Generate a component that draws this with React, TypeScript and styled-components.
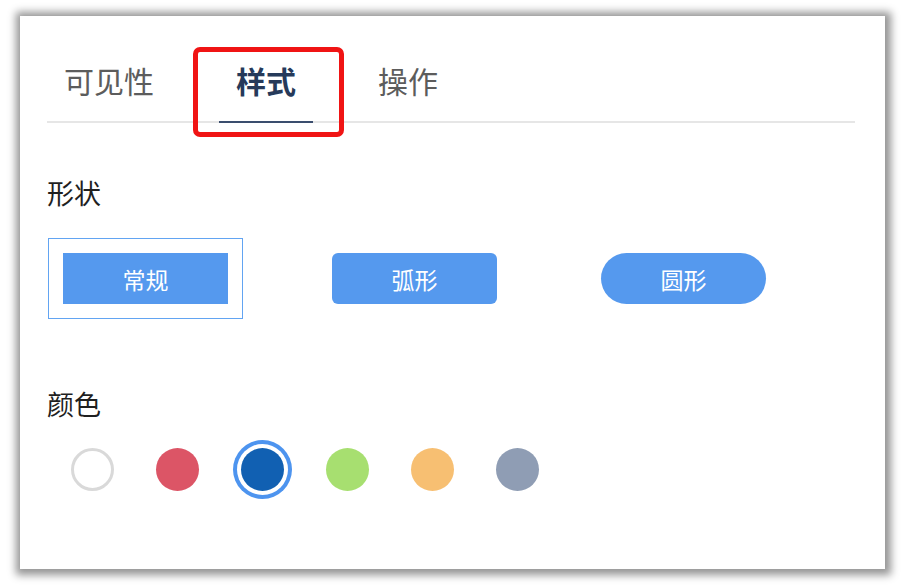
import React, { useState } from "react";
import styled, { createGlobalStyle } from "styled-components";

const GlobalStyle = createGlobalStyle`
  html, body {
    margin: 0;
    padding: 0;
    background: #fff;
  }
  body {
    font-family: "Noto Sans CJK SC", "Noto Sans", sans-serif;
  }
  * {
    box-sizing: border-box;
  }
`;

interface ActiveProps {
  $active?: boolean;
}

interface ShapeProps {
  $radius: string;
}

interface SwatchProps {
  $color: string;
  $active?: boolean;
  $outline?: boolean;
}

const tabs = ["可见性", "样式", "操作"];

const shapes = [
  { label: "常规", radius: "0" },
  { label: "弧形", radius: "6px" },
  { label: "圆形", radius: "26px" },
];

const colors = [
  { value: "#ffffff", outline: true },
  { value: "#dc5566" },
  { value: "#1160b2" },
  { value: "#a7df70" },
  { value: "#f7bf72" },
  { value: "#8f9db4" },
];

export default function App() {
  const [tab, setTab] = useState(1);
  const [shape, setShape] = useState(0);
  const [color, setColor] = useState(2);

  return (
    <>
      <GlobalStyle />
      <Page>
        <Panel>
          <TabBar>
            {tabs.map((t, i) => (
              <Tab key={t} $active={i === tab} onClick={() => setTab(i)}>
                {t}
                {i === 1 && <Highlight />}
              </Tab>
            ))}
          </TabBar>

          <ShapeLabel>形状</ShapeLabel>
          <ShapeRow>
            {shapes.map((s, i) => (
              <ShapeOption key={s.label} $active={i === shape} onClick={() => setShape(i)}>
                <ShapeButton $radius={s.radius}>{s.label}</ShapeButton>
              </ShapeOption>
            ))}
          </ShapeRow>

          <ColorLabel>颜色</ColorLabel>
          <SwatchRow>
            {colors.map((c, i) => (
              <SwatchCell key={c.value + i} onClick={() => setColor(i)}>
                <Swatch $color={c.value} $outline={c.outline} $active={i === color} />
              </SwatchCell>
            ))}
          </SwatchRow>
        </Panel>
      </Page>
    </>
  );
}

const Page = styled.div`
  width: 905px;
  height: 585px;
  padding: 16px 20px;
`;

const Panel = styled.div`
  width: 865px;
  height: 553px;
  background: #fff;
  padding: 0 30px 0 27px;
  box-shadow: 1px 1px 8px 5px rgba(0, 0, 0, 0.42);
`;

const TabBar = styled.div`
  display: flex;
  gap: 48px;
  padding-top: 49px;
  border-bottom: 2px solid #e6e6e6;
`;

const Tab = styled.div<ActiveProps>`
  position: relative;
  padding: 0 17px 26px;
  margin-bottom: -2px;
  font-size: 30px;
  line-height: 30px;
  font-weight: ${(p) => (p.$active ? 700 : 400)};
  color: ${(p) => (p.$active ? "#263a5a" : "#5c5c5c")};
  border-bottom: 2px solid ${(p) => (p.$active ? "#3a4d6e" : "transparent")};
  cursor: pointer;
`;

/* red annotation frame drawn over the active tab */
const Highlight = styled.span`
  position: absolute;
  left: -26px;
  right: -31px;
  top: -18px;
  bottom: -16px;
  border: 5px solid #f01414;
  border-radius: 7px;
  pointer-events: none;
`;

const SectionLabel = styled.div`
  font-size: 27px;
  line-height: 27px;
  color: #1f1f1f;
`;

const ShapeLabel = styled(SectionLabel)`
  margin-top: 56px;
`;

const ColorLabel = styled(SectionLabel)`
  margin-top: 71px;
`;

const ShapeRow = styled.div`
  display: flex;
  gap: 74px;
  margin-top: 32px;
  padding-left: 1px;
`;

const ShapeOption = styled.div<ActiveProps>`
  padding: 14px;
  border: 1px solid ${(p) => (p.$active ? "#62a4f2" : "transparent")};
  cursor: pointer;
`;

const ShapeButton = styled.div<ShapeProps>`
  width: 165px;
  height: 51px;
  display: flex;
  align-items: center;
  justify-content: center;
  background: #5599ee;
  border-radius: ${(p) => p.$radius};
  color: #fff;
  font-size: 23px;
`;

const SwatchRow = styled.div`
  display: flex;
  align-items: center;
  gap: 25px;
  margin-top: 22px;
  padding-left: 15px;
`;

const SwatchCell = styled.div`
  width: 60px;
  height: 60px;
  display: flex;
  align-items: center;
  justify-content: center;
  cursor: pointer;
`;

const Swatch = styled.div<SwatchProps>`
  width: 43px;
  height: 43px;
  border-radius: 50%;
  background: ${(p) => p.$color};
  border: ${(p) => (p.$outline ? "3px solid #d9d9d9" : "none")};
  box-shadow: ${(p) => (p.$active ? "0 0 0 4px #fff, 0 0 0 8px #4d94ef" : "none")};
`;
